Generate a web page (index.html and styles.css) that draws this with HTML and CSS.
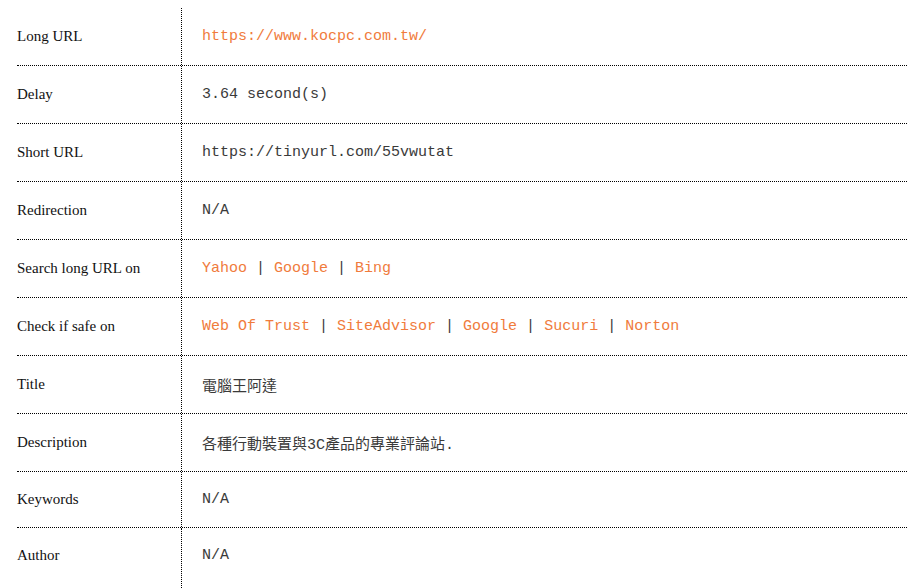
FILE: index.html
```html
<!DOCTYPE html>
<html>
<head>
<meta charset="utf-8">
<link rel="stylesheet" href="styles.css">
</head>
<body>
<div class="info">
  <div class="row"><div class="label">Long URL</div><div class="value"><a class="link">https://www.kocpc.com.tw/</a></div></div>
  <div class="row"><div class="label">Delay</div><div class="value">3.64 second(s)</div></div>
  <div class="row"><div class="label">Short URL</div><div class="value">https://tinyurl.com/55vwutat</div></div>
  <div class="row"><div class="label">Redirection</div><div class="value">N/A</div></div>
  <div class="row"><div class="label">Search long URL on</div><div class="value"><a class="link">Yahoo</a> | <a class="link">Google</a> | <a class="link">Bing</a></div></div>
  <div class="row"><div class="label">Check if safe on</div><div class="value"><a class="link">Web Of Trust</a> | <a class="link">SiteAdvisor</a> | <a class="link">Google</a> | <a class="link">Sucuri</a> | <a class="link">Norton</a></div></div>
  <div class="row"><div class="label">Title</div><div class="value">電腦王阿達</div></div>
  <div class="row"><div class="label">Description</div><div class="value">各種行動裝置與3C產品的專業評論站.</div></div>
  <div class="row short"><div class="label">Keywords</div><div class="value">N/A</div></div>
  <div class="row last"><div class="label">Author</div><div class="value">N/A</div></div>
</div>
</body>
</html>
```
FILE: styles.css
```css
html, body {
  margin: 0;
  padding: 0;
  background: #fff;
}
.info {
  width: 890px;
  margin: 8px 0 0 17px;
  display: flex;
  flex-direction: column;
}
.row {
  display: flex;
  height: 58px;
  box-sizing: border-box;
  border-bottom: 1px dotted #000;
}
.row.short {
  height: 56px;
}
.row.last {
  border-bottom: none;
  height: 60px;
}
.label {
  width: 165px;
  box-sizing: border-box;
  border-right: 1px dotted #000;
  display: flex;
  align-items: center;
  padding-bottom: 1px;
  font-family: "Liberation Serif", "Times New Roman", serif;
  font-size: 15px;
  color: #111;
}
.row.last .label,
.row.last .value {
  padding-bottom: 6px;
}
.value {
  flex: 1;
  padding-left: 20px;
  display: flex;
  align-items: center;
  white-space: pre;
  font-family: "Liberation Mono", "Courier New", "Noto Sans CJK TC", monospace;
  font-size: 15px;
  color: #3a3a3a;
}
.link {
  color: #f07b3c;
  text-decoration: none;
}
```
